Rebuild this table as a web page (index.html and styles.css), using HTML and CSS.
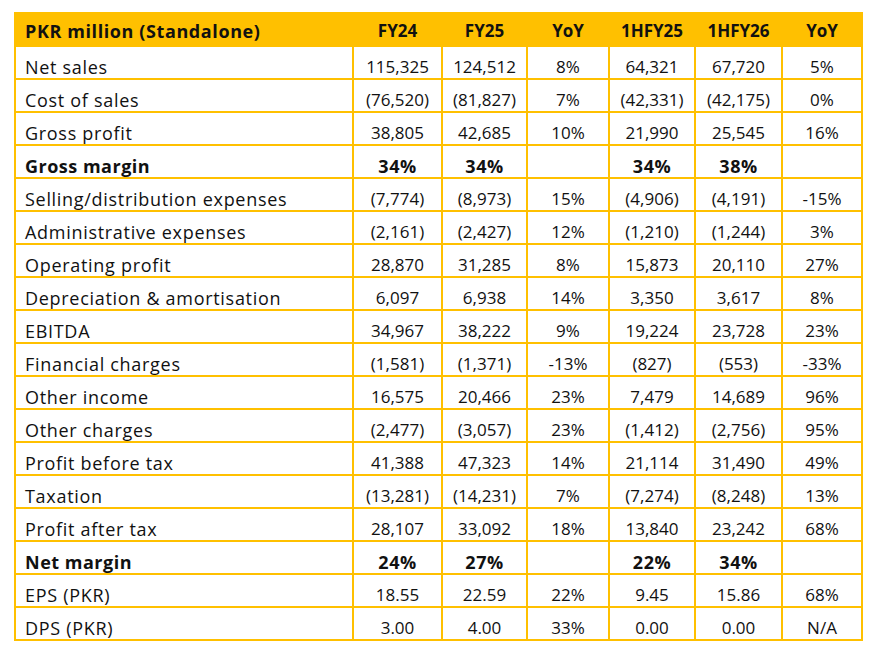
FILE: index.html
```html
<!DOCTYPE html>
<html>
<head>
<meta charset="utf-8">
<link rel="stylesheet" href="styles.css">
</head>
<body>
<div class="page">
  <div class="grid">
    <div class="c h label">PKR million (Standalone)</div>
    <div class="c h">FY24</div>
    <div class="c h">FY25</div>
    <div class="c h">YoY</div>
    <div class="c h">1HFY25</div>
    <div class="c h">1HFY26</div>
    <div class="c h">YoY</div>

    <div class="c label">Net sales</div><div class="c">115,325</div><div class="c">124,512</div><div class="c">8%</div><div class="c">64,321</div><div class="c">67,720</div><div class="c">5%</div>
    <div class="c label">Cost of sales</div><div class="c">(76,520)</div><div class="c">(81,827)</div><div class="c">7%</div><div class="c">(42,331)</div><div class="c">(42,175)</div><div class="c">0%</div>
    <div class="c label">Gross profit</div><div class="c">38,805</div><div class="c">42,685</div><div class="c">10%</div><div class="c">21,990</div><div class="c">25,545</div><div class="c">16%</div>
    <div class="c label b">Gross margin</div><div class="c b">34%</div><div class="c b">34%</div><div class="c"></div><div class="c b">34%</div><div class="c b">38%</div><div class="c"></div>
    <div class="c label">Selling/distribution expenses</div><div class="c">(7,774)</div><div class="c">(8,973)</div><div class="c">15%</div><div class="c">(4,906)</div><div class="c">(4,191)</div><div class="c">-15%</div>
    <div class="c label">Administrative expenses</div><div class="c">(2,161)</div><div class="c">(2,427)</div><div class="c">12%</div><div class="c">(1,210)</div><div class="c">(1,244)</div><div class="c">3%</div>
    <div class="c label">Operating profit</div><div class="c">28,870</div><div class="c">31,285</div><div class="c">8%</div><div class="c">15,873</div><div class="c">20,110</div><div class="c">27%</div>
    <div class="c label">Depreciation &amp; amortisation</div><div class="c">6,097</div><div class="c">6,938</div><div class="c">14%</div><div class="c">3,350</div><div class="c">3,617</div><div class="c">8%</div>
    <div class="c label">EBITDA</div><div class="c">34,967</div><div class="c">38,222</div><div class="c">9%</div><div class="c">19,224</div><div class="c">23,728</div><div class="c">23%</div>
    <div class="c label">Financial charges</div><div class="c">(1,581)</div><div class="c">(1,371)</div><div class="c">-13%</div><div class="c">(827)</div><div class="c">(553)</div><div class="c">-33%</div>
    <div class="c label">Other income</div><div class="c">16,575</div><div class="c">20,466</div><div class="c">23%</div><div class="c">7,479</div><div class="c">14,689</div><div class="c">96%</div>
    <div class="c label">Other charges</div><div class="c">(2,477)</div><div class="c">(3,057)</div><div class="c">23%</div><div class="c">(1,412)</div><div class="c">(2,756)</div><div class="c">95%</div>
    <div class="c label">Profit before tax</div><div class="c">41,388</div><div class="c">47,323</div><div class="c">14%</div><div class="c">21,114</div><div class="c">31,490</div><div class="c">49%</div>
    <div class="c label">Taxation</div><div class="c">(13,281)</div><div class="c">(14,231)</div><div class="c">7%</div><div class="c">(7,274)</div><div class="c">(8,248)</div><div class="c">13%</div>
    <div class="c label">Profit after tax</div><div class="c">28,107</div><div class="c">33,092</div><div class="c">18%</div><div class="c">13,840</div><div class="c">23,242</div><div class="c">68%</div>
    <div class="c label b">Net margin</div><div class="c b">24%</div><div class="c b">27%</div><div class="c"></div><div class="c b">22%</div><div class="c b">34%</div><div class="c"></div>
    <div class="c label">EPS (PKR)</div><div class="c">18.55</div><div class="c">22.59</div><div class="c">22%</div><div class="c">9.45</div><div class="c">15.86</div><div class="c">68%</div>
    <div class="c label">DPS (PKR)</div><div class="c">3.00</div><div class="c">4.00</div><div class="c">33%</div><div class="c">0.00</div><div class="c">0.00</div><div class="c">N/A</div>
  </div>
</div>
</body>
</html>
```

FILE: styles.css
```css
html, body {
  margin: 0;
  padding: 0;
  background: #ffffff;
}

.page {
  padding: 12px 0 0 14px;
}

.grid {
  display: grid;
  grid-template-columns: 338px 89px 85px 82px 86px 87px 80px;
  grid-auto-rows: 33px;
  width: max-content;
  border-left: 2px solid #ffc000;
  border-top: 2px solid #ffc000;
  font-family: "Open Sans", "Noto Sans", sans-serif;
  font-size: 17px;
  color: #111111;
}

.c {
  box-sizing: border-box;
  border-right: 2px solid #ffc000;
  border-bottom: 2px solid #ffc000;
  display: flex;
  align-items: flex-end;
  justify-content: center;
  padding-bottom: 0;
  line-height: 22px;
  white-space: nowrap;
}

.label {
  justify-content: flex-start;
  padding-left: 9px;
  font-size: 18px;
  letter-spacing: 0.7px;
}

.h {
  background: #ffc000;
  font-weight: 700;
  align-items: center;
  padding-top: 3px;
  padding-bottom: 0;
}

.h.label {
  letter-spacing: 0.6px;
}

.b {
  font-weight: 700;
  font-size: 18px;
  letter-spacing: 0.5px;
}
```
